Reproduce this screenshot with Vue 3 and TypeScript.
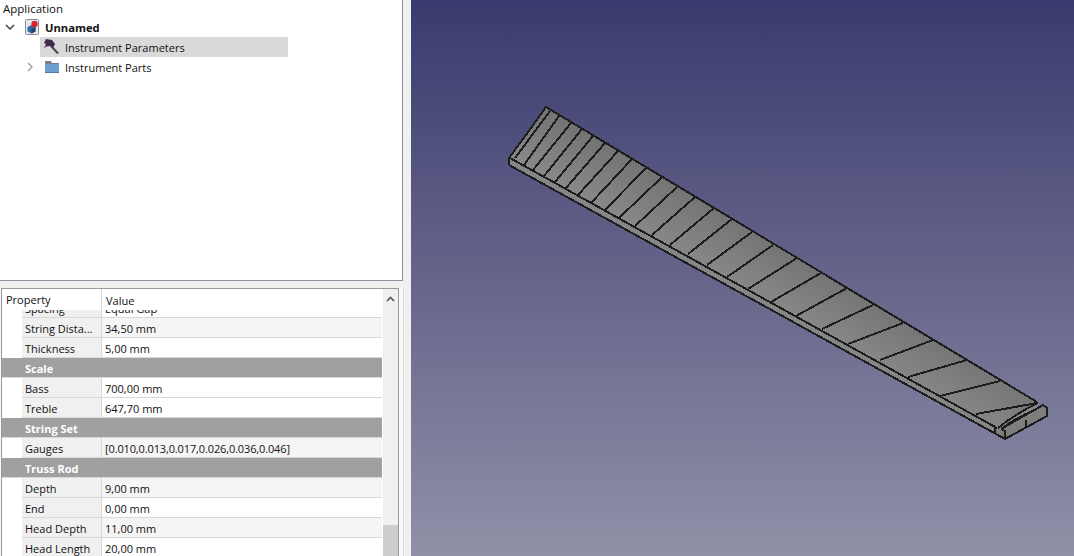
<script setup lang="ts">
interface PropRow {
  name: string
  value?: string
  section?: boolean
  even?: boolean
  tight?: boolean
}

const rows: PropRow[] = [
  { name: 'Spacing', value: 'Equal Gap' },
  { name: 'String Dista...', value: '34,50 mm', even: true },
  { name: 'Thickness', value: '5,00 mm' },
  { name: 'Scale', section: true },
  { name: 'Bass', value: '700,00 mm' },
  { name: 'Treble', value: '647,70 mm' },
  { name: 'String Set', section: true },
  { name: 'Gauges', value: '[0.010,0.013,0.017,0.026,0.036,0.046]', even: true, tight: true },
  { name: 'Truss Rod', section: true },
  { name: 'Depth', value: '9,00 mm', even: true },
  { name: 'End', value: '0,00 mm' },
  { name: 'Head Depth', value: '11,00 mm', even: true },
  { name: 'Head Length', value: '20,00 mm' },
]

// fret end points in viewport coordinates: top edge x,y then front edge x,y
const frets: number[][] = [
  [550, 111, 515, 158], [559, 116, 524, 165], [571, 123, 533, 170], [582, 129, 544, 176],
  [593, 136, 555, 182], [605, 143, 566, 188], [618, 151, 578, 195], [632, 159, 591, 203],
  [646, 168, 605, 210], [662, 177, 619, 218], [677, 187, 635, 226], [695, 197, 652, 235],
  [714, 208, 670, 245], [732, 219, 688, 254], [752, 232, 707, 265], [773, 245, 727, 277],
  [797, 258, 748, 289], [821, 273, 771, 302], [847, 288, 796, 316], [873, 305, 822, 329],
  [903, 323, 848, 344], [933, 340, 880, 360], [967, 360, 908, 377], [1000, 381, 940, 396],
  [1037, 403, 976, 414],
]
</script>

<template>
  <div class="window">
    <aside class="side">
      <div class="tree">
        <div class="tree-head">Application</div>
        <div class="tree-row doc-row">
          <svg class="chev-down" width="10" height="6" viewBox="0 0 10 6">
            <path d="M1 1l4 4 4-4" fill="none" stroke="#444" stroke-width="1.5" />
          </svg>
          <svg class="doc-icon" width="16" height="16" viewBox="0 0 16 16">
            <rect x="1.5" y="0.5" width="13" height="15" rx="1" fill="#e8e8ec" stroke="#8a8a92" />
            <path d="M3.5 8l4-2 4 2v4.500l-4 2-4-2z" fill="#2d6ca8" />
            <path d="M7.500 10v4.500l4-2V8z" fill="#1c4470" />
            <circle cx="10.500" cy="5" r="3.200" fill="#d9212b" />
          </svg>
          <span class="doc-name">Unnamed</span>
        </div>
        <div class="tree-row param-row">
          <svg class="item-icon" width="16" height="16" viewBox="0 0 16 16">
            <path d="M8 7l7 7.500" stroke="#4a4650" stroke-width="2" />
            <path d="M3 0l6 1 3 4-2 4-3-2-3 .5-3 1.500 2-4-2-1z" fill="#452a4f" />
            <path d="M0.500 9l3-2" stroke="#9a92a0" stroke-width="1" />
          </svg>
          <span>Instrument Parameters</span>
        </div>
        <div class="tree-row parts-row">
          <svg class="chev-right" width="6" height="10" viewBox="0 0 6 10">
            <path d="M1 1l4 4-4 4" fill="none" stroke="#a6a6a6" stroke-width="1.500" />
          </svg>
          <svg class="item-icon" width="16" height="14" viewBox="0 0 16 14">
            <path d="M1 1h6l1 2h7v2H1z" fill="#77808c" />
            <rect x="1" y="4" width="14" height="9" fill="#6f9fd0" />
            <rect x="1" y="12" width="14" height="1" fill="#4d79a8" />
          </svg>
          <span>Instrument Parts</span>
        </div>
      </div>

      <div class="props-wrap">
        <div class="props">
          <div class="table">
            <div class="table-head">
              <span class="head-name">Property</span>
              <span class="head-value">Value</span>
            </div>
            <div class="table-body">
              <div class="rows">
                <template v-for="row in rows" :key="row.name">
                  <div v-if="row.section" class="section">{{ row.name }}</div>
                  <div v-else class="row" :class="{ even: row.even }">
                    <span class="cell-name">{{ row.name }}</span>
                    <span class="cell-value" :class="{ tight: row.tight }">{{ row.value }}</span>
                  </div>
                </template>
              </div>
            </div>
          </div>
          <div class="scrollbar">
            <svg class="arrow" width="9" height="6" viewBox="0 0 9 6">
              <path d="M1 5l3.500-3.500L8 5" fill="none" stroke="#555" stroke-width="1.600" />
            </svg>
            <div class="thumb"></div>
          </div>
        </div>
      </div>
    </aside>

    <main class="viewport">
      <svg class="model" width="663" height="556" viewBox="411 0 663 556" shape-rendering="crispEdges">
        <defs>
          <linearGradient id="top-face" gradientUnits="userSpaceOnUse" x1="640" y1="160" x2="610" y2="212">
            <stop offset="0" stop-color="#727272" />
            <stop offset="1" stop-color="#888888" />
          </linearGradient>
        </defs>
        <path d="M509 158V165L996 434L1005 439V429L997 428L510 158Z" fill="#868686" />
        <path d="M546 107L1037 402L1038 404L998 428L510 158Q527 134 546 107Z" fill="url(#top-face)" />
        <path d="M1001 429L1043 405L1047 408V416L1005 439L996 433V428Z" fill="#7e7e7e" />
        <path d="M998 428Q1015 415 1038 404L1037 409Q1015 418 1001 429Z" fill="#8a8a8a" />

        <g fill="none" stroke="#1d1d1d" stroke-width="2">
          <path d="M509 165V158Q527 134 546 107L1037 402" />
          <path d="M510 158L997 428" />
          <path d="M509 165L1005 439" />
          <path d="M998 428Q1015 414 1038 403" />
          <path d="M1001 429Q1015 418 1037 409" />
          <path d="M1001 429L1043 405L1047 408V416L1005 439V431L1001 429" />
          <path d="M995 428V433" />
          <path d="M1026 420V428" />
          <line v-for="(f, i) in frets" :key="i" :x1="f[0]" :y1="f[1]" :x2="f[2]" :y2="f[3]" />
        </g>
      </svg>
    </main>
  </div>
</template>

<style>
html,
body {
  margin: 0;
  background: #f0f0f0;
}
</style>

<style scoped>
.window {
  display: flex;
  width: 1074px;
  height: 556px;
  overflow: hidden;
  font-family: "Open Sans", "Noto Sans", sans-serif;
  font-size: 11px;
  color: #111;
  background: #f0f0f0;
}

.side {
  width: 411px;
  flex: none;
  display: flex;
  flex-direction: column;
}

.tree {
  width: 402px;
  height: 280px;
  flex: none;
  background: #fff;
  border-right: 1px solid #8f8f9f;
  border-bottom: 1px solid #8f8f9f;
}

.tree-head {
  height: 17px;
  padding-left: 3px;
  line-height: 17px;
  font-size: 11.5px;
}

.tree-row {
  height: 20px;
  display: flex;
  align-items: center;
}

.doc-row {
  padding-left: 5px;
}

.doc-icon {
  margin-left: 9px;
}

.doc-name {
  margin-left: 5px;
  font-size: 11.2px;
  font-weight: 700;
}

.param-row {
  width: 248px;
  margin-left: 40px;
  padding-left: 3px;
  box-sizing: border-box;
  background: #d9d9d9;
}

.parts-row {
  padding-left: 27px;
}

.item-icon {
  flex: none;
  margin-right: 6px;
}

.parts-row .item-icon {
  margin-right: 5px;
}

.chev-right {
  margin-right: 11px;
}

.props-wrap {
  width: 403px;
  height: 268px;
  margin-top: 7px;
  border-right: 1px solid #dcdcdc;
  box-sizing: content-box;
  background: #f8f8f8;
}

.props {
  width: 396px;
  height: 100%;
  margin-left: 1px;
  display: flex;
  background: #fff;
  border: 1px solid #9a9aa6;
  border-bottom: 0;
}

.table {
  width: 380px;
  flex: none;
  display: flex;
  flex-direction: column;
}

.table-head {
  height: 21px;
  flex: none;
  display: flex;
  align-items: center;
}

.head-name {
  width: 99px;
  padding-left: 4px;
  box-sizing: border-box;
  line-height: 23px;
}

.head-value {
  height: 100%;
  padding-left: 4px;
  line-height: 23px;
  border-left: 1px solid #d8d8d8;
}

.table-body {
  flex: 1;
  overflow: hidden;
}

.rows {
  margin-top: -12px;
}

.row {
  height: 20px;
  margin-left: 20px;
  display: flex;
  box-sizing: border-box;
  line-height: 21px;
  border-bottom: 1px solid #d8d8d8;
}

.row.even {
  background: #f5f5f5;
}

.cell-name {
  width: 79px;
  padding-left: 3px;
  box-sizing: border-box;
  background: #f0f0f0;
  white-space: nowrap;
  overflow: hidden;
}

.cell-value {
  flex: 1;
  padding-left: 3px;
  border-left: 1px solid #d8d8d8;
  white-space: nowrap;
}

.cell-value.tight {
  letter-spacing: -0.13px;
}

.section {
  height: 20px;
  padding-left: 23px;
  box-sizing: border-box;
  line-height: 21px;
  font-weight: 700;
  color: #fff;
  background: #a0a0a0;
  border-bottom: 1px solid #d8d8d8;
}

.scrollbar {
  width: 15px;
  flex: none;
  display: flex;
  flex-direction: column;
  align-items: center;
  background: #f0f0f0;
  margin-left: 1px;
}

.arrow {
  margin-top: 7px;
}

.thumb {
  width: 100%;
  height: 32px;
  margin-top: auto;
  background: #cdcdcd;
}

.viewport {
  flex: 1;
  background: linear-gradient(180deg, #3a3a6e 0%, #9090a8 100%);
}

.model {
  display: block;
}
</style>
